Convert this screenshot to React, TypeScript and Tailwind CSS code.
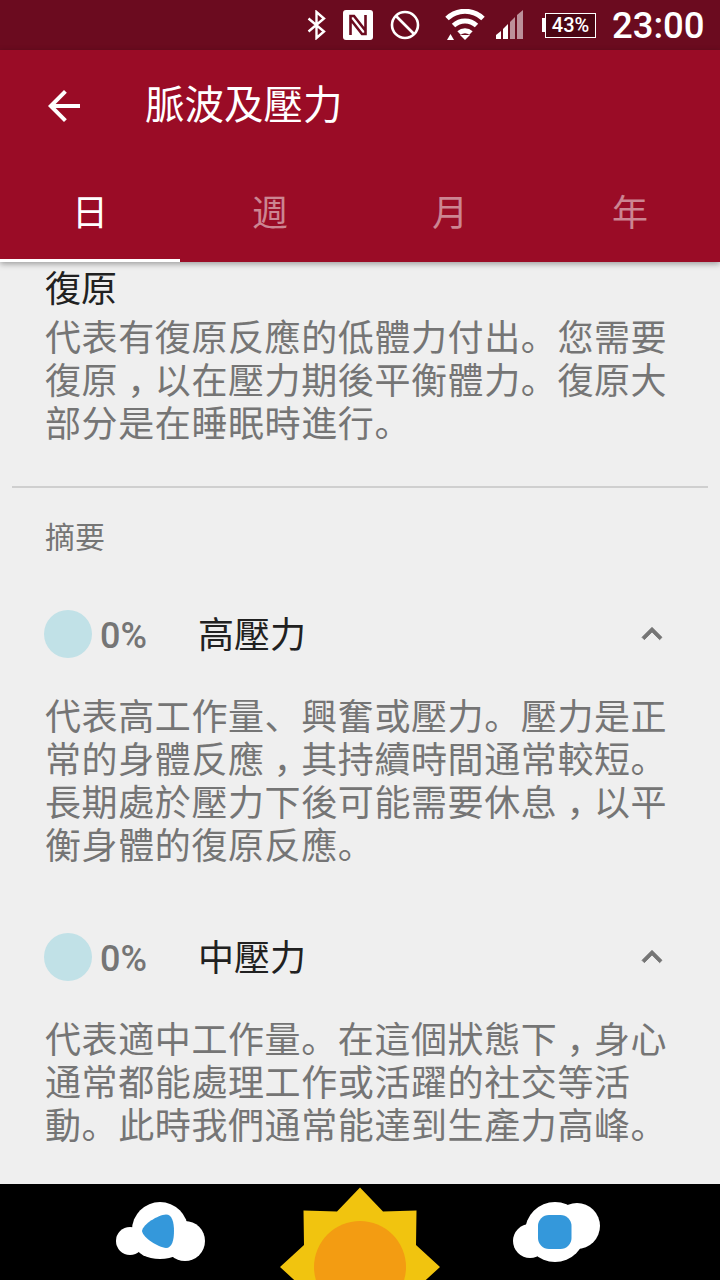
import React from "react";

const CJK = "font-['Roboto','Noto_Sans_CJK_SC',sans-serif]";

const StatusBar = () => (
  <div className="flex h-[50px] shrink-0 items-center bg-[#6b0b1f] pl-[306px] text-white">
    <svg width="22" height="30" viewBox="0 0 22 30" fill="none" stroke="#fff" strokeWidth="2.4">
      <path d="M2.5 8.5 18 21.5 10.5 28V2L18 8.5 2.5 21.5" />
    </svg>
    <svg width="32" height="32" viewBox="0 0 32 32" className="ml-[14px]">
      <path d="M4 1h24a3 3 0 0 1 3 3v24a3 3 0 0 1-3 3H4a3 3 0 0 1-3-3V4a3 3 0 0 1 3-3z" fill="#fff" />
      <path d="M8.500 26V7h3.500l11 14M23.500 6v19H20L9 11" fill="none" stroke="#6b0b1f" strokeWidth="2.600" />
    </svg>
    <svg width="32" height="32" viewBox="0 0 32 32" fill="none" stroke="#fff" strokeWidth="2.6" className="ml-[15px]">
      <circle cx="16" cy="16" r="13" />
      <path d="M7 7l18 18" />
    </svg>
    <svg width="40" height="32" viewBox="0 0 40 32" className="ml-[24px]" fill="none" stroke="#fff">
      <path d="M2 9.5a26 26 0 0 1 36 0" strokeWidth="5" />
      <path d="M8.5 16.500a17 17 0 0 1 23 0" strokeWidth="5" />
      <path d="M14 24a9 9 0 0 1 12 0" strokeWidth="5" />
      <path d="M15 26h10l-5 5z" fill="#fff" stroke="none" />
      <path d="M2 31l3.500-6 3.500 6z" fill="#fff" stroke="none" />
    </svg>
    <svg width="32" height="32" viewBox="0 0 32 32" className="ml-[10px]">
      <path d="M1 30v-4l5-4v8z" fill="#fff" />
      <path d="M8 30V20l5-5v15z" fill="#fff" />
      <path d="M15 30V13l5-5v22z" fill="#fff" fillOpacity="0.55" />
      <path d="M22 30V6l6-5v29z" fill="#fff" fillOpacity="0.55" />
    </svg>
    <div className="ml-[15px] flex items-center">
      <div className="h-[14px] w-[3px] bg-white" />
      <div className="flex h-[25px] w-[51px] items-center justify-center border border-white bg-[#4a0513] text-[20px] font-medium leading-none font-['Roboto',sans-serif]">
        43%
      </div>
    </div>
    <span className="ml-[16px] pt-[2px] text-[36.5px] font-medium leading-none font-['Roboto',sans-serif]">23:00</span>
  </div>
);

const Header = () => (
  <div className="relative z-10 shrink-0 bg-[#9a0c26] shadow-[0_2px_6px_rgba(0,0,0,0.35)]">
    <div className="flex h-[112px] items-center pl-[40px]">
      <svg width="48" height="48" viewBox="0 0 24 24" fill="#fff">
        <path d="M20 11H7.830l5.590-5.590L12 4l-8 8 8 8 1.410-1.410L7.830 13H20v-2z" />
      </svg>
      <h1 className="ml-[57px] text-[39.5px] leading-none text-white">脈波及壓力</h1>
    </div>
    <div className="grid h-[100px] grid-cols-4">
      {["日", "週", "月", "年"].map((tab, i) => (
        <div
          key={tab}
          className={
            i === 0
              ? "flex items-center justify-center border-b-[3px] border-white pt-[6px] text-[36px] leading-none text-white"
              : "flex items-center justify-center border-b-[3px] border-transparent pt-[6px] text-[36px] leading-none text-white/50"
          }
        >
          {tab}
        </div>
      ))}
    </div>
  </div>
);

const Chevron = () => (
  <svg width="40" height="40" viewBox="0 0 24 24" fill="#757575" stroke="#757575" strokeWidth="0.5">
    <path d="M12 8l-6 6 1.410 1.410L12 10.830l4.590 4.580L18 14z" />
  </svg>
);

// the device font sets the full-width comma in the middle of its cell
const Body = ({ lines }: { lines: string[] }) => (
  <>
    {lines.map((line) => (
      <span key={line} className="block whitespace-nowrap">
        {line.split("，").map((part, i) => (
          <React.Fragment key={part}>
            {i > 0 && <span className="mx-[9px] [font-feature-settings:'halt']">，</span>}
            {part}
          </React.Fragment>
        ))}
      </span>
    ))}
  </>
);

const Summary = ({ title, lines }: { title: string; lines: string[] }) => (
  <div>
    <div className="flex h-[48px] items-center pl-[44px] pr-[48px]">
      <div className="h-[48px] w-[48px] rounded-full bg-[#c1e1e7]" />
      <span className="ml-[8px] w-[98px] pt-[4px] text-[36px] font-medium text-[#757575]">0%</span>
      <span className="flex-1 pt-[4px] text-[36px] leading-none text-[#212121]">{title}</span>
      <Chevron />
    </div>
    <p className="mt-[39px] px-[45px] text-[36px] leading-[43px] tracking-[0.6px] text-[#757575]">
      <Body lines={lines} />
    </p>
  </div>
);

const BottomNav = () => (
  <div className="flex h-[96px] shrink-0 items-start overflow-hidden bg-black pl-[116px]">
    <svg width="90" height="62" viewBox="116 1202 90 62" className="mt-[18px]">
      <g fill="#fff">
        <circle cx="160" cy="1230" r="28" />
        <circle cx="130" cy="1241" r="14" />
        <circle cx="185" cy="1241" r="20" />
        <ellipse cx="160" cy="1246" rx="24" ry="13" />
      </g>
      <path
        d="M142 1231C143 1224 158 1215 166 1214.500C172 1214.500 174 1222 174 1231C174 1240 172 1248 166 1248C158 1247 143 1238 142 1231Z"
        fill="#3498db"
      />
    </svg>
    <svg width="160" height="93" viewBox="280 1187 160 93" className="ml-[74px] mt-[3px]">
      <path
        d="M360 1187.500 383 1211.500 416.500 1210.500 416 1245 440 1267 416 1289 304 1289 280 1267 304 1245 303.500 1210.500 337 1211.500Z"
        fill="#f1c40f"
      />
      <circle cx="360" cy="1267" r="46" fill="#f39c12" />
    </svg>
    <svg width="90" height="64" viewBox="512 1202 90 64" className="ml-[72px] mt-[18px]">
      <g fill="#fff">
        <circle cx="555" cy="1232" r="30" />
        <circle cx="577" cy="1226" r="23" />
        <circle cx="530" cy="1241" r="17" />
      </g>
      <rect x="538" y="1215" width="33.500" height="34" rx="11" fill="#3498db" />
    </svg>
  </div>
);

export default function App() {
  return (
    <div className={`flex h-[1280px] w-[720px] flex-col overflow-hidden bg-[#efefef] ${CJK}`}>
      <StatusBar />
      <Header />
      <main className="min-h-0 flex-1 overflow-hidden pt-[7px]">
        <div className="px-[45px]">
          <h2 className="text-[36px] leading-[43px] text-[#212121]">復原</h2>
          <p className="mt-[6px] text-[36px] leading-[43px] tracking-[0.6px] text-[#757575]">
            <Body
              lines={[
                "代表有復原反應的低體力付出。您需要",
                "復原，以在壓力期後平衡體力。復原大",
                "部分是在睡眠時進行。",
              ]}
            />
          </p>
        </div>
        <hr className="mx-[12px] mt-[39px] border-t-2 border-[#cfcfcf]" />
        <h3 className="mt-[30px] px-[45px] text-[30px] leading-[40px] text-[#757575]">摘要</h3>
        <div className="mt-[52px] flex flex-col gap-[64px]">
          <Summary
            title="高壓力"
            lines={[
              "代表高工作量、興奮或壓力。壓力是正",
              "常的身體反應，其持續時間通常較短。",
              "長期處於壓力下後可能需要休息，以平",
              "衡身體的復原反應。",
            ]}
          />
          <Summary
            title="中壓力"
            lines={[
              "代表適中工作量。在這個狀態下，身心",
              "通常都能處理工作或活躍的社交等活",
              "動。此時我們通常能達到生產力高峰。",
            ]}
          />
        </div>
      </main>
      <BottomNav />
    </div>
  );
}
